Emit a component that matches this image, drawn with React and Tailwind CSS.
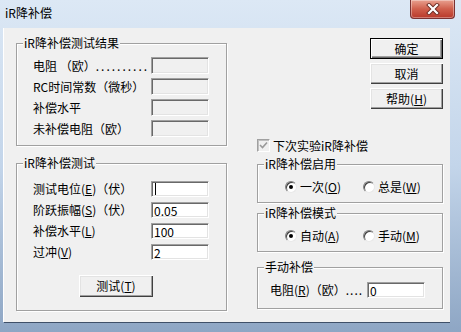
import React from "react";

const FONT = "font-['Noto_Sans_CJK_SC','Noto_Sans',sans-serif]";

function Group({ title, className, children }) {
  return (
    <div className={`relative border border-[#a0a0a0] shadow-[inset_1px_1px_0_#ffffff,1px_1px_0_#ffffff] ${className}`}>
      <span className="absolute left-[6px] -top-[8px] px-[1px] bg-[#f0f0f0] leading-[14px] whitespace-nowrap">{title}</span>
      {children}
    </div>
  );
}

function Field({ value, disabled, caret, className }) {
  return (
    <div
      className={`relative w-[58px] border border-t-[#a0a0a0] border-l-[#a0a0a0] border-b-white border-r-white shadow-[inset_1px_1px_0_#696969,inset_-1px_-1px_0_#e3e3e3] ${disabled ? "bg-[#f0f0f0]" : "bg-white"} pl-[2px] flex items-center leading-[13px] ${className}`}
    >
      {caret ? <span className="block w-[1px] h-[12px] bg-black ml-[1px]" /> : value}
    </div>
  );
}

function Btn({ children, def, className }) {
  return (
    <div
      className={`flex items-center justify-center bg-[#f0f0f0] ${def ? "border border-black shadow-[inset_1px_1px_0_#ffffff,inset_-1px_-1px_0_#696969,inset_-2px_-2px_0_#a0a0a0]" : "shadow-[inset_1px_1px_0_#ffffff,inset_-1px_-1px_0_#404040,inset_-2px_-2px_0_#a0a0a0,inset_2px_2px_0_#e3e3e3]"} ${className}`}
    >
      {children}
    </div>
  );
}

function Radio({ checked }) {
  return (
    <span className="relative w-[12px] h-[12px] rounded-full bg-white border border-t-[#808080] border-l-[#808080] border-b-[#e8e8e8] border-r-[#e8e8e8] shadow-[inset_1px_1px_0_#404040] flex items-center justify-center shrink-0">
      {checked ? <span className="block w-[4px] h-[4px] rounded-full bg-black" /> : null}
    </span>
  );
}

function RadioRow({ a, b, aKey, bKey }) {
  return (
    <div className="flex items-center h-[14px] pl-[27px]">
      <div className="w-[78px] flex items-center gap-[3px]">
        <Radio checked />
        <span>
          {a}(<u>{aKey}</u>)
        </span>
      </div>
      <div className="flex items-center gap-[3px]">
        <Radio />
        <span>
          {b}(<u>{bKey}</u>)
        </span>
      </div>
    </div>
  );
}

export default function App() {
  return (
    <div className={`w-[461px] h-[332px] flex flex-col bg-gradient-to-b from-[#dce8f5] via-[#c3d5ea] to-[#8ea6c4] ${FONT} text-[12px] leading-[14px] text-black overflow-hidden`}>
      {/* title bar */}
      <div className="relative h-[28px] flex items-center pl-[5px] pb-[3px] text-[12px]">
        <span>iR降补偿</span>
        <div className="absolute right-[6px] top-0 w-[45px] h-[19px] rounded-b-[4px] border border-t-0 border-[#7a3232] bg-gradient-to-b from-[#e8a08f] via-[#cf5f4c] to-[#b8382a] shadow-[inset_0_0_0_1px_rgba(255,255,255,0.35)] flex items-center justify-center">
          <svg width="14" height="12" viewBox="0 0 14 12">
            <path d="M3 2 L11 10 M11 2 L3 10" stroke="#6b2a22" strokeWidth="4" strokeLinecap="square" />
            <path d="M3 2 L11 10 M11 2 L3 10" stroke="#ffffff" strokeWidth="2.2" strokeLinecap="square" />
          </svg>
        </div>
      </div>

      {/* client */}
      <div className="ml-[4px] mr-[11px] h-[294px] bg-[#f0f0f0] flex shadow-[0_1px_0_#3f5068,-1px_0_0_#ffffff]">
        {/* left column */}
        <div className="ml-[12px] mt-[15px] w-[211px] flex flex-col">
          <Group title="iR降补偿测试结果" className="h-[103px] pt-[13px] pl-[16px]">
            <div className="flex flex-col gap-[4px]">
              <div className="flex items-center h-[17px]">
                <span className="w-[118px] whitespace-nowrap">
                  电阻 （欧）<span className="tracking-[2px]">..........</span>
                </span>
                <Field disabled className="h-[17px]" />
              </div>
              <div className="flex items-center h-[17px]">
                <span className="w-[118px] whitespace-nowrap">RC时间常数（微秒）</span>
                <Field disabled className="h-[17px]" />
              </div>
              <div className="flex items-center h-[17px]">
                <span className="w-[118px] whitespace-nowrap">补偿水平</span>
                <Field disabled className="h-[17px]" />
              </div>
              <div className="flex items-center h-[17px]">
                <span className="w-[118px] whitespace-nowrap">未补偿电阻（欧）</span>
                <Field disabled className="h-[17px]" />
              </div>
            </div>
          </Group>

          <Group title="iR降补偿测试" className="mt-[17px] h-[148px] pt-[17px] pl-[16px]">
            <div className="flex flex-col gap-[5px]">
              <div className="flex items-center h-[16px]">
                <span className="w-[118px] whitespace-nowrap">
                  测试电位(<u>E</u>)（伏）
                </span>
                <Field caret className="h-[16px]" />
              </div>
              <div className="flex items-center h-[16px]">
                <span className="w-[118px] whitespace-nowrap">
                  阶跃振幅(<u>S</u>)（伏）
                </span>
                <Field value="0.05" className="h-[16px]" />
              </div>
              <div className="flex items-center h-[16px]">
                <span className="w-[118px] whitespace-nowrap">
                  补偿水平(<u>L</u>)
                </span>
                <Field value="100" className="h-[16px]" />
              </div>
              <div className="flex items-center h-[16px]">
                <span className="w-[118px] whitespace-nowrap">
                  过冲(<u>V</u>)
                </span>
                <Field value="2" className="h-[16px]" />
              </div>
            </div>
            <Btn className="mt-[15px] ml-[46px] w-[74px] h-[22px]">
              <span>
                测试(<u>T</u>)
              </span>
            </Btn>
          </Group>
        </div>

        {/* right column */}
        <div className="ml-[30px] w-[186px] flex flex-col">
          <div className="mt-[10px] flex flex-col items-end gap-[4px]">
            <Btn def className="w-[73px] h-[21px]">确定</Btn>
            <Btn className="w-[73px] h-[21px]">取消</Btn>
            <Btn className="w-[73px] h-[21px]">
              <span>
                帮助(<u>H</u>)
              </span>
            </Btn>
          </div>

          <div className="mt-[30px] h-[13px] flex items-center gap-[3px]">
            <span className="w-[13px] h-[13px] border border-t-[#a0a0a0] border-l-[#a0a0a0] border-b-white border-r-white shadow-[inset_1px_1px_0_#c0c0c0] bg-[#f0f0f0] flex items-center justify-center shrink-0">
              <svg width="9" height="9" viewBox="0 0 9 9">
                <path d="M1 4 L3.5 6.5 L8 1.5" stroke="#9a9a9a" strokeWidth="1.6" fill="none" />
              </svg>
            </span>
            <span className="whitespace-nowrap">下次实验iR降补偿</span>
          </div>

          <Group title="iR降补偿启用" className="mt-[12px] h-[39px] pt-[15px]">
            <RadioRow a="一次" aKey="O" b="总是" bKey="W" />
          </Group>

          <Group title="iR降补偿模式" className="mt-[10px] h-[39px] pt-[15px]">
            <RadioRow a="自动" aKey="A" b="手动" bKey="M" />
          </Group>

          <Group title="手动补偿" className="mt-[15px] h-[42px] pt-[14px] pl-[12px]">
            <div className="flex items-center h-[16px]">
              <span className="w-[97px] whitespace-nowrap">
                电阻(<u>R</u>)（欧）<span className="tracking-[1px]">....</span>
              </span>
              <Field value="0" className="h-[16px]" />
            </div>
          </Group>
        </div>
      </div>
    </div>
  );
}
